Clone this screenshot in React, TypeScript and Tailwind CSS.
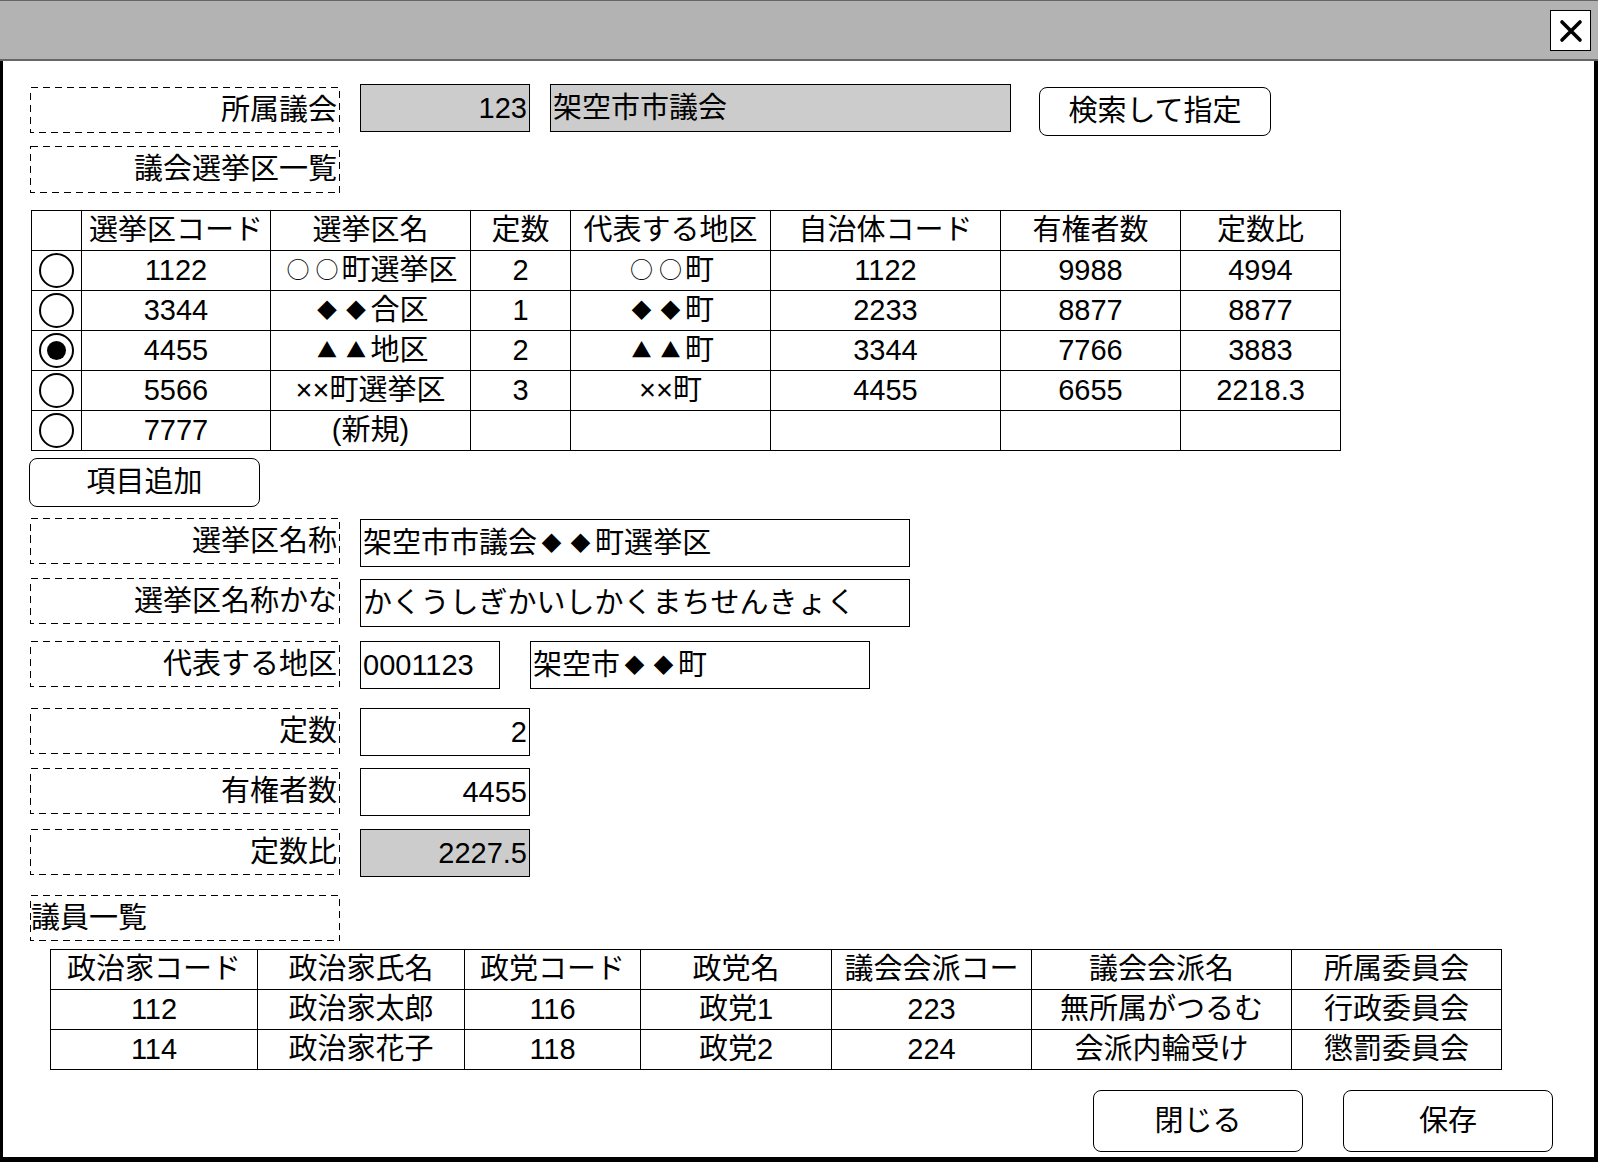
import React from 'react';

// full-width symbols (○◆▲): one em cell each, slightly smaller glyph, like the original form
const jp = (s: string) =>
  Array.from(s).map((ch, i) =>
    /[○◆▲]/.test(ch) ? (
      <span
        key={i}
        className={`inline-block w-[29px] text-center -translate-y-[2px] font-['Noto_Sans_CJK_JP',sans-serif] ${
          ch === '○' ? 'text-[23px]' : 'text-[20px]'
        }`}
      >
        {ch}
      </span>
    ) : (
      <React.Fragment key={i}>{ch}</React.Fragment>
    )
  );

const Label: React.FC<{ children: React.ReactNode; className?: string; left?: boolean; h?: number }> = ({
  children,
  className = '',
  left,
  h = 46,
}) => (
  <div
    className={`relative w-[310px] shrink-0 flex items-center ${left ? 'justify-start pl-px' : 'justify-end pr-[3px]'} ${
      h === 47 ? 'h-[47px]' : 'h-[46px]'
    } ${className}`}
  >
    <svg className="absolute inset-0 pointer-events-none" width="310" height={h}>
      <rect
        x="0.5"
        y="0.5"
        width="309"
        height={h - 1}
        fill="none"
        stroke="black"
        strokeWidth="1"
        strokeDasharray="7 5"
        shapeRendering="crispEdges"
      />
    </svg>
    <span className="relative">{children}</span>
  </div>
);

const Field: React.FC<{ children?: React.ReactNode; className?: string; right?: boolean; gray?: boolean }> = ({
  children,
  className = '',
  right,
  gray,
}) => (
  <div
    className={`h-[48px] shrink-0 border border-black flex items-center whitespace-nowrap overflow-hidden ${
      right ? 'justify-end pr-[2px]' : 'justify-start pl-[2px]'
    } ${gray ? 'bg-[#cccccc]' : 'bg-white'} ${className}`}
  >
    <span>{children}</span>
  </div>
);

const Radio: React.FC<{ checked?: boolean }> = ({ checked }) => (
  <div className="w-[35px] h-[35px] rounded-full border-[2.5px] border-black flex items-center justify-center">
    {checked && <div className="w-[19px] h-[19px] rounded-full bg-black" />}
  </div>
);

const districts = [
  { code: '1122', name: '○○町選挙区', seats: '2', area: '○○町', muni: '1122', voters: '9988', ratio: '4994' },
  { code: '3344', name: '◆◆合区', seats: '1', area: '◆◆町', muni: '2233', voters: '8877', ratio: '8877' },
  { code: '4455', name: '▲▲地区', seats: '2', area: '▲▲町', muni: '3344', voters: '7766', ratio: '3883', checked: true },
  { code: '5566', name: '××町選挙区', seats: '3', area: '××町', muni: '4455', voters: '6655', ratio: '2218.3' },
  { code: '7777', name: '(新規)', seats: '', area: '', muni: '', voters: '', ratio: '' },
];

const members = [
  ['112', '政治家太郎', '116', '政党1', '223', '無所属がつるむ', '行政委員会'],
  ['114', '政治家花子', '118', '政党2', '224', '会派内輪受け', '懲罰委員会'],
];

const cell = 'h-[40px] border-r border-b border-black flex items-center justify-center whitespace-nowrap overflow-hidden';

export default function App() {
  return (
    <div className="w-[1598px] h-[1162px] bg-white flex flex-col text-black text-[29px] leading-none font-['Liberation_Sans','DejaVu_Sans','Noto_Sans_CJK_JP',sans-serif]">
      {/* title bar */}
      <div className="h-[61px] shrink-0 bg-[#b3b3b3] border-t border-b-2 border-[#666666] flex items-start justify-end pr-[7px] pt-[9px]">
        <button className="w-[41px] h-[41px] bg-white border border-black flex items-center justify-center">
          <svg width="24" height="24" viewBox="0 0 24 24">
            <path d="M3 3 L21 21 M21 3 L3 21" stroke="black" strokeWidth="3.6" strokeLinecap="round" />
          </svg>
        </button>
      </div>

      <div className="flex-1 flex flex-col border-l-[3px] border-r-[4px] border-b-[5px] border-black pl-[27px] pr-[41px] pt-[23px]">
        {/* 所属議会 */}
        <div className="flex items-start">
          <Label className="mt-[3px]">所属議会</Label>
          <Field right gray className="ml-[20px] w-[170px]">123</Field>
          <Field gray className="ml-[20px] w-[461px]">架空市市議会</Field>
          <button className="ml-[28px] mt-[3px] w-[232px] h-[49px] border border-black rounded-[8px] bg-white">
            検索して指定
          </button>
        </div>

        <Label className="mt-[10px]" h={47}>議会選挙区一覧</Label>

        {/* 選挙区 table */}
        <div className="mt-[17px] ml-[1px] w-fit grid grid-cols-[50px_189px_200px_100px_200px_230px_180px_160px] border-l border-t border-black">
          <div className={cell} />
          <div className={cell}>選挙区コード</div>
          <div className={cell}>選挙区名</div>
          <div className={cell}>定数</div>
          <div className={cell}>代表する地区</div>
          <div className={cell}>自治体コード</div>
          <div className={cell}>有権者数</div>
          <div className={cell}>定数比</div>
          {districts.map((d) => (
            <React.Fragment key={d.code}>
              <div className={cell}>
                <Radio checked={d.checked} />
              </div>
              <div className={cell}>{d.code}</div>
              <div className={cell}>
                <span>{jp(d.name)}</span>
              </div>
              <div className={cell}>{d.seats}</div>
              <div className={cell}>
                <span>{jp(d.area)}</span>
              </div>
              <div className={cell}>{d.muni}</div>
              <div className={cell}>{d.voters}</div>
              <div className={cell}>{d.ratio}</div>
            </React.Fragment>
          ))}
        </div>

        <button className="mt-[7px] -ml-px w-[231px] h-[49px] border border-black rounded-[8px] bg-white">項目追加</button>

        {/* detail form */}
        <div className="mt-[11px] flex items-start">
          <Label>選挙区名称</Label>
          <Field className="ml-[20px] mt-[1px] w-[550px]">{jp('架空市市議会◆◆町選挙区')}</Field>
        </div>
        <div className="mt-[11px] flex items-start">
          <Label>選挙区名称かな</Label>
          <Field className="ml-[20px] mt-[1px] w-[550px]">かくうしぎかいしかくまちせんきょく</Field>
        </div>
        <div className="mt-[14px] flex items-start">
          <Label>代表する地区</Label>
          <Field className="ml-[20px] w-[140px]">0001123</Field>
          <Field className="ml-[30px] w-[340px]">{jp('架空市◆◆町')}</Field>
        </div>
        <div className="mt-[19px] flex items-start">
          <Label>定数</Label>
          <Field right className="ml-[20px] w-[170px]">2</Field>
        </div>
        <div className="mt-[12px] flex items-start">
          <Label>有権者数</Label>
          <Field right className="ml-[20px] w-[170px]">4455</Field>
        </div>
        <div className="mt-[13px] flex items-start">
          <Label>定数比</Label>
          <Field right gray className="ml-[20px] w-[170px]">2227.5</Field>
        </div>

        <Label left className="mt-[18px]">議員一覧</Label>

        {/* 議員 table */}
        <div className="mt-[8px] ml-[20px] w-fit grid grid-cols-[207px_207px_176px_191px_200px_260px_210px] border-l border-t border-black">
          {['政治家コード', '政治家氏名', '政党コード', '政党名', '議会会派コー', '議会会派名', '所属委員会'].map((h) => (
            <div key={h} className={cell}>
              {h}
            </div>
          ))}
          {members.map((row) =>
            row.map((v, i) => (
              <div key={row[0] + i} className={cell}>
                {v}
              </div>
            ))
          )}
        </div>

        <div className="mt-[20px] flex justify-end gap-[40px]">
          <button className="w-[210px] h-[62px] border border-black rounded-[8px] bg-white">閉じる</button>
          <button className="w-[210px] h-[62px] border border-black rounded-[8px] bg-white">保存</button>
        </div>
      </div>
    </div>
  );
}
